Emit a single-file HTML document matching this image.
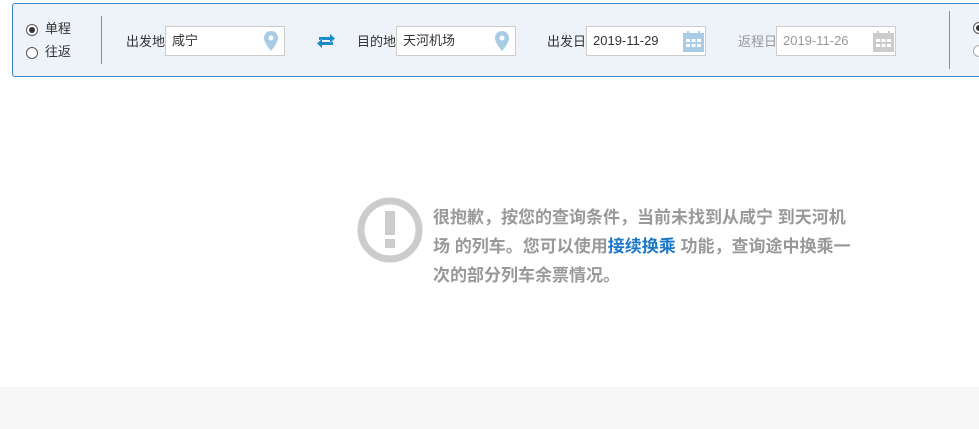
<!DOCTYPE html>
<html><head><meta charset="utf-8"><style>
*{margin:0;padding:0;box-sizing:border-box}
body{width:979px;height:429px;overflow:hidden;background:#fff;font-family:"Liberation Sans","Noto Sans CJK SC",sans-serif;font-size:12px;color:#333;position:relative}
.panel{position:absolute;left:12px;top:3px;width:980px;height:74px;background:#eef2f9;border:1px solid #3d8ac0;border-radius:3px}
.a{position:absolute}
.radio{position:absolute;width:12px;height:12px;border:1px solid #555;border-radius:50%;background:#fff}
.radio.on::after{content:"";position:absolute;left:2px;top:2px;width:6px;height:6px;border-radius:50%;background:#333}
.lbl{position:absolute;font-size:13px;line-height:16px}
.inp{position:absolute;width:120px;height:30px;background:#fff;border:1px solid #ccc;font-size:13px;line-height:28px;padding-left:6px}
.div{position:absolute;width:1px;background:#5d9dc5}
.msg{position:absolute;left:433px;top:203px;width:422px;font-size:17px;line-height:29px;color:#999;font-weight:bold}
.msg a{color:#1a76c9;text-decoration:none}
.foot{position:absolute;left:0;top:387px;width:979px;height:42px;background:#f7f7f7}
</style></head><body>
<div class="panel"></div>
<div class="radio on" style="left:26px;top:24px"></div>
<div class="lbl" style="left:45px;top:21px">单程</div>
<div class="radio" style="left:26px;top:47px"></div>
<div class="lbl" style="left:45px;top:44px">往返</div>
<div class="div" style="left:101px;top:16px;height:48px"></div>

<div class="lbl" style="left:126px;top:34px">出发地</div>
<div class="inp" style="left:165px;top:26px">咸宁</div>
<svg class="a" style="left:264px;top:31px" width="14" height="20" viewBox="0 0 14 20"><path d="M7 0C3 0 0 3 0 7c0 5 7 13 7 13s7-8 7-13C14 3 11 0 7 0z" fill="#a8cbe6"/><circle cx="7" cy="7" r="2.5" fill="#fff"/></svg>
<svg class="a" style="left:317px;top:34px" width="18" height="14" viewBox="0 0 18 14"><path d="M2 3h11V0l5 4.5-5 4.5V6H2zM16 8H5V5L0 9.5 5 14v-3h11z" fill="#1a8ac9"/></svg>

<div class="lbl" style="left:357px;top:34px">目的地</div>
<div class="inp" style="left:396px;top:26px">天河机场</div>
<svg class="a" style="left:495px;top:31px" width="14" height="20" viewBox="0 0 14 20"><path d="M7 0C3 0 0 3 0 7c0 5 7 13 7 13s7-8 7-13C14 3 11 0 7 0z" fill="#a8cbe6"/><circle cx="7" cy="7" r="2.5" fill="#fff"/></svg>

<div class="lbl" style="left:547px;top:34px">出发日</div>
<div class="inp" style="left:586px;top:26px">2019-11-29</div>
<svg class="a" style="left:683px;top:31px" width="21" height="21" viewBox="0 0 21 21"><rect x="0" y="2" width="21" height="19" fill="#a8cbe6"/><rect x="4" y="0" width="2" height="4" fill="#a8cbe6"/><rect x="15" y="0" width="2" height="4" fill="#a8cbe6"/><g fill="#fff"><rect x="3" y="8" width="4" height="3"/><rect x="8.5" y="8" width="4" height="3"/><rect x="14" y="8" width="4" height="3"/><rect x="3" y="13" width="4" height="3"/><rect x="8.5" y="13" width="4" height="3"/><rect x="14" y="13" width="4" height="3"/></g></svg>

<div class="lbl" style="left:738px;top:34px;color:#999">返程日</div>
<div class="inp" style="left:776px;top:26px;color:#999">2019-11-26</div>
<svg class="a" style="left:873px;top:31px" width="21" height="21" viewBox="0 0 21 21"><rect x="0" y="2" width="21" height="19" fill="#ccc"/><rect x="4" y="0" width="2" height="4" fill="#ccc"/><rect x="15" y="0" width="2" height="4" fill="#ccc"/><g fill="#fff"><rect x="3" y="8" width="4" height="3"/><rect x="8.5" y="8" width="4" height="3"/><rect x="14" y="8" width="4" height="3"/><rect x="3" y="13" width="4" height="3"/><rect x="8.5" y="13" width="4" height="3"/><rect x="14" y="13" width="4" height="3"/></g></svg>

<div class="div" style="left:949px;top:11px;height:58px"></div>
<div class="radio on" style="left:973px;top:22px"></div>
<div class="radio" style="left:973px;top:45px;border-color:#aaa"></div>

<svg class="a" style="left:357px;top:197px" width="66" height="66" viewBox="0 0 66 66"><circle cx="33" cy="33" r="29" fill="none" stroke="#ccc" stroke-width="7"/><rect x="28" y="14" width="10" height="24" fill="#ccc"/><rect x="28" y="42" width="10" height="9" fill="#ccc"/></svg>
<div class="msg">很抱歉，按您的查询条件，当前未找到从咸宁 到天河机场 的列车。您可以使用<a>接续换乘</a> 功能，查询途中换乘一次的部分列车余票情况。</div>

<div class="foot"></div>
</body></html>
